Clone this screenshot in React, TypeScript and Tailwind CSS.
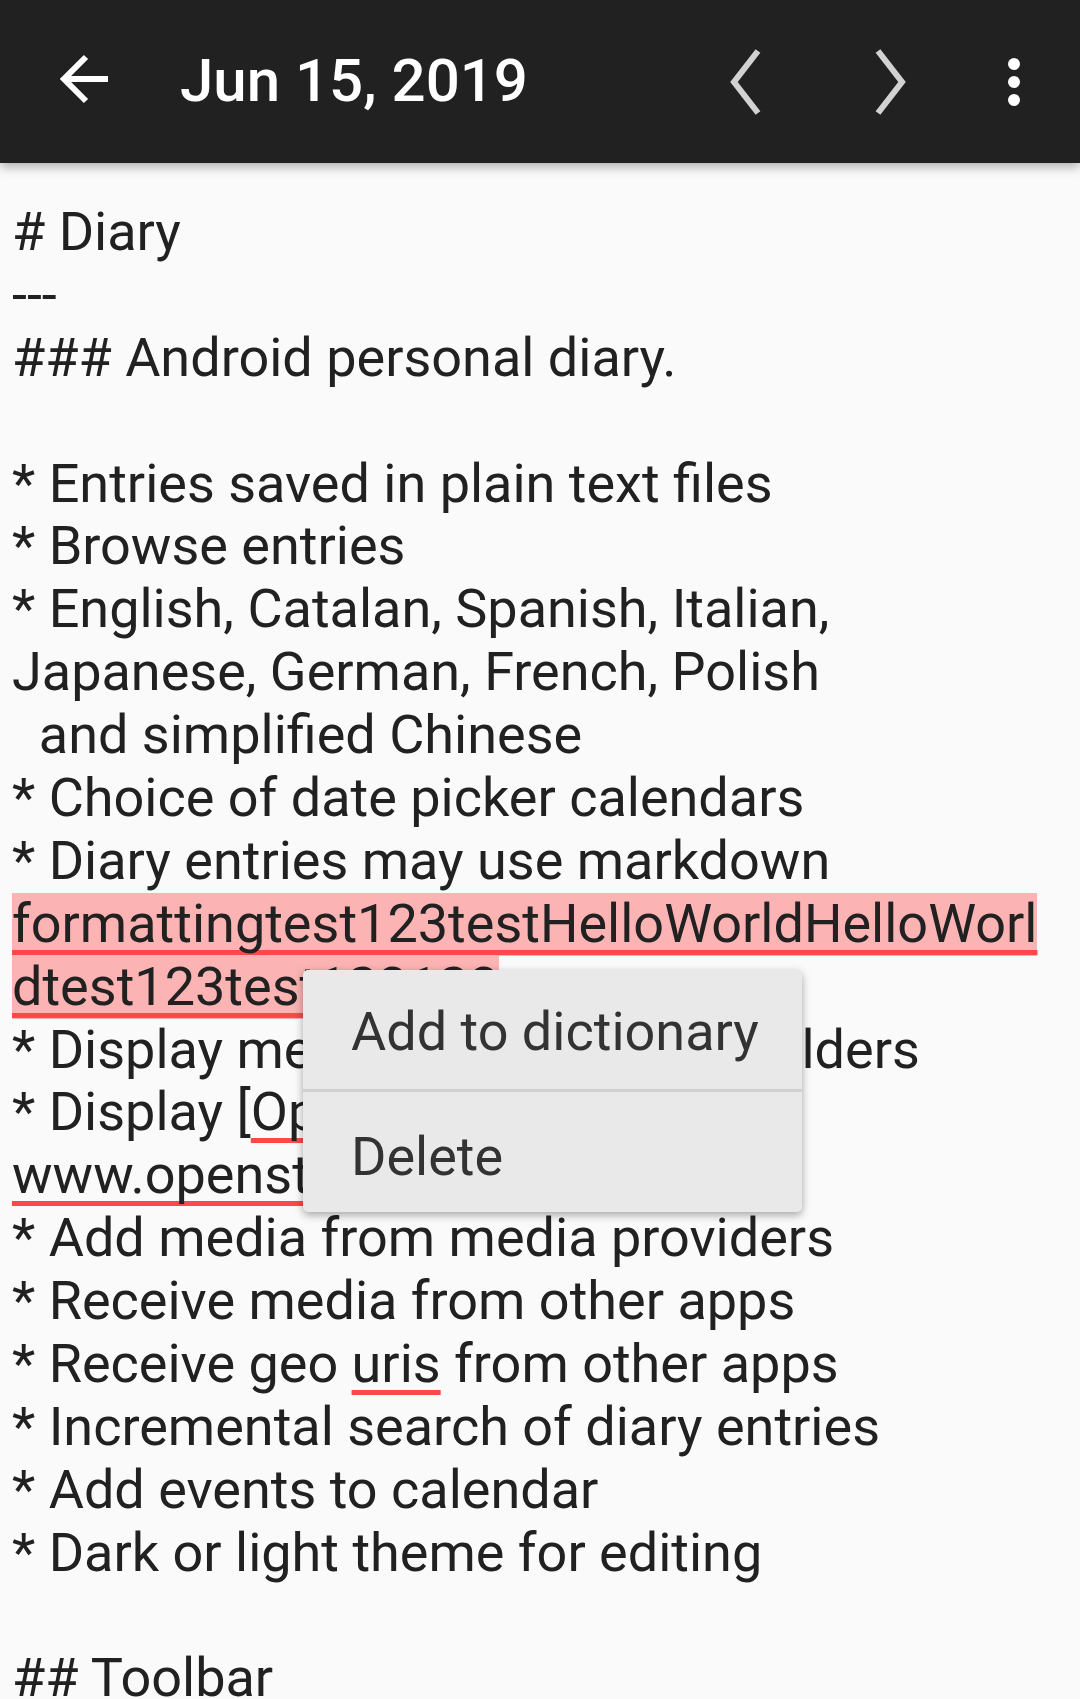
import React from 'react';

type Seg = { text: string; spell?: boolean };
type Line = { segs: Seg[]; mark?: boolean };

const plain = (t: string): Line => ({ segs: [{ text: t }] });

const lines: Line[] = [
  plain('# Diary'),
  plain('---'),
  plain('### Android personal diary.'),
  plain(''),
  plain('* Entries saved in plain text files'),
  plain('* Browse entries'),
  plain('* English, Catalan, Spanish, Italian,'),
  plain('Japanese, German, French, Polish'),
  plain('  and simplified Chinese'),
  plain('* Choice of date picker calendars'),
  plain('* Diary entries may use markdown'),
  { segs: [{ text: 'formattingtest123testHelloWorldHelloWorl', spell: true }], mark: true },
  { segs: [{ text: 'dtest123test123123', spell: true }], mark: true },
  plain('* Display media stored in diary folders'),
  { segs: [{ text: '* Display [' }, { text: 'OpenStreetMap', spell: true }, { text: '](' }] },
  { segs: [{ text: 'www.openstreetmap.org', spell: true }, { text: ')' }] },
  plain('* Add media from media providers'),
  plain('* Receive media from other apps'),
  { segs: [{ text: '* Receive geo ' }, { text: 'uris', spell: true }, { text: ' from other apps' }] },
  plain('* Incremental search of diary entries'),
  plain('* Add events to calendar'),
  plain('* Dark or light theme for editing'),
  plain(''),
  plain('## Toolbar'),
];

function Header() {
  return (
    <header className="relative z-10 h-[163px] bg-[#212121] flex items-center shadow-[0_4px_10px_rgba(0,0,0,0.3)]">
      {/* back arrow */}
      <div className="w-[170px] flex items-center">
        <svg className="ml-[58px] mb-[5px] w-[56px] h-[56px]" viewBox="0 0 56 56" fill="none" stroke="#ffffff" strokeWidth={6}>
          <path d="M7 28H50" />
          <path d="M28 6L6 28l22 22" strokeLinejoin="miter" />
        </svg>
      </div>
      <h1 className="ml-[10px] mb-[2px] text-white text-[60px] font-medium font-['Roboto',sans-serif] leading-none">
        Jun 15, 2019
      </h1>
      <div className="ml-auto flex items-center">
        <svg className="w-[48px] h-[72px]" viewBox="0 0 48 72" fill="none" stroke="#d2d2d2" strokeWidth={6} strokeLinejoin="miter">
          <path d="M36 5L12 36l24 31" />
        </svg>
        <svg className="ml-[96px] w-[48px] h-[72px]" viewBox="0 0 48 72" fill="none" stroke="#d2d2d2" strokeWidth={6} strokeLinejoin="miter">
          <path d="M12 5l24 31-24 31" />
        </svg>
        <div className="ml-[94px] mr-[60px] flex flex-col items-center gap-[6px]">
          <span className="w-[12px] h-[12px] rounded-full bg-white" />
          <span className="w-[12px] h-[12px] rounded-full bg-white" />
          <span className="w-[12px] h-[12px] rounded-full bg-white" />
        </div>
      </div>
    </header>
  );
}

function ContextMenu() {
  return (
    <div className="absolute left-[303px] top-[970px] w-[499px] rounded-[5px] bg-[#e9e9e9] shadow-[0_3px_8px_rgba(0,0,0,0.35)] text-[54px] text-[#333333] font-['Roboto',sans-serif]">
      <div className="h-[122px] flex items-center pl-[48px] pt-[4px] border-b-[3px] border-[#d0d0d0]">Add to dictionary</div>
      <div className="h-[120px] flex items-center pl-[48px] pt-[8px]">Delete</div>
    </div>
  );
}

export default function App() {
  return (
    <div className="relative w-[1080px] h-[1699px] overflow-hidden bg-[#fafafa]">
      <Header />
      <main className="pt-[38px] pl-[12px] text-[54px] leading-[62.9px] text-[#212121] font-['Roboto',sans-serif]">
        {lines.map((line, i) => (
          <div key={i} className="h-[62.9px] whitespace-pre">
            <span className={line.mark ? 'inline-block h-[62.9px] bg-[#fbb3b3]' : ''}>
              {line.segs.map((s, j) =>
                s.spell ? (
                  <span
                    key={j}
                    className="underline decoration-[#ff4848] decoration-[5px] underline-offset-[8px] [text-decoration-skip-ink:none]"
                  >
                    {s.text}
                  </span>
                ) : (
                  <span key={j}>{s.text}</span>
                )
              )}
            </span>
          </div>
        ))}
      </main>
      <ContextMenu />
    </div>
  );
}
